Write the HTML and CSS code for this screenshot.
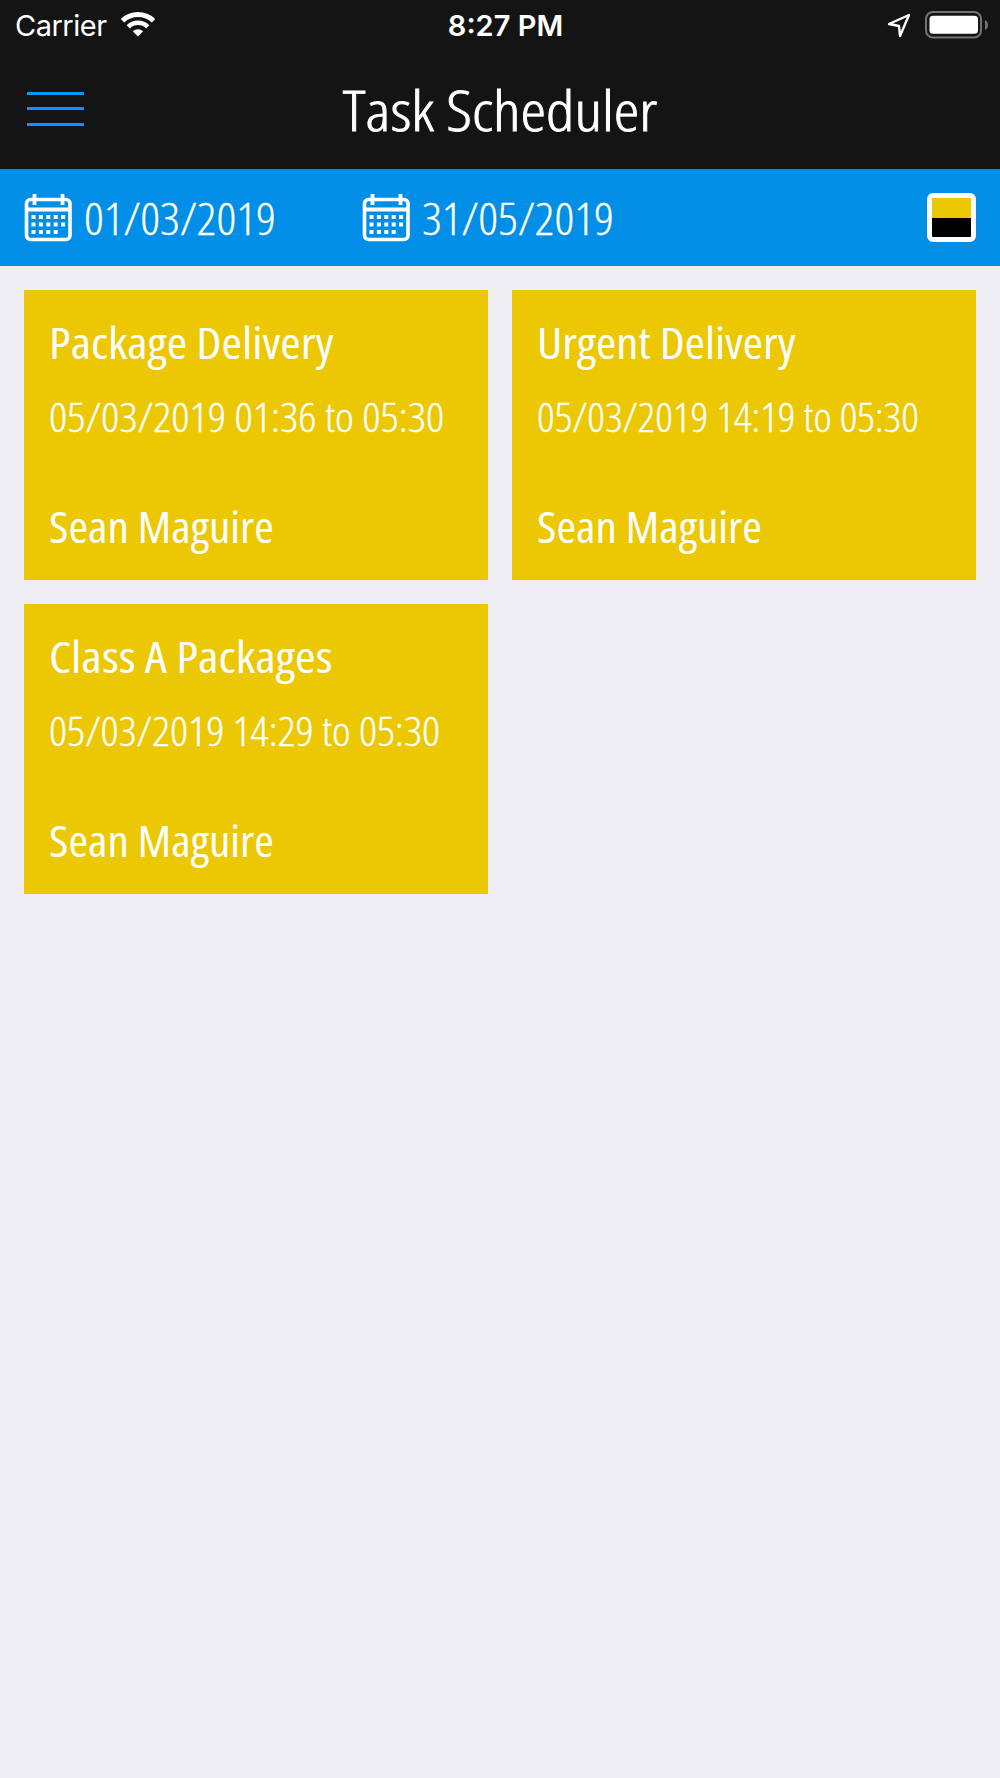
FILE: index.html
```html
<!DOCTYPE html>
<html lang="en">
<head>
    <meta charset="UTF-8">
    <meta name="viewport" content="width=device-width, initial-scale=1.0">
    <title>Task Scheduler</title>
    <link rel="stylesheet" href="styles.css">
</head>
<body>

<header class="header">
    <div class="status-bar">
        <div class="status-left">
            <span class="carrier">Carrier</span>
            <svg class="wifi" width="34" height="25" viewBox="0 0 34 25" fill="none" stroke="#fff">
                <path d="M1.500 8.800A22.500 22.500 0 0 1 32.500 8.800" stroke-width="5"/>
                <path d="M7.300 14.800A13.800 13.800 0 0 1 26.700 14.800" stroke-width="4.600"/>
                <path d="M17 24.500L11.800 19.300Q17 15 22.200 19.300Z" fill="#fff" stroke="none"/>
            </svg>
        </div>
        <span class="clock">8:27 PM</span>
        <div class="status-right">
            <svg width="24" height="26" viewBox="0 0 24 26" fill="none" stroke="#fff" stroke-width="2.400" stroke-linejoin="round">
                <path d="M22 3L2 12L12 14L13 24Z"/>
            </svg>
            <svg class="battery" width="64" height="28" viewBox="0 0 64 28">
                <rect x="1" y="1" width="55" height="25.500" rx="7" fill="none" stroke="#737373" stroke-width="2"/>
                <rect x="4.500" y="4.800" width="48.500" height="18" rx="3.500" fill="#fff"/>
                <path d="M60 9Q63 10.500 63 14T60 19Z" fill="#737373"/>
            </svg>
        </div>
    </div>
    <div class="nav-bar">
        <button class="menu-button" aria-label="Menu">
            <span></span>
            <span></span>
            <span></span>
        </button>
        <h1 class="title">Task Scheduler</h1>
    </div>
</header>

<div class="filter-bar">
    <div class="date">
        <svg class="calendar" width="48" height="49" viewBox="0 0 48 49">
            <rect x="2.500" y="6.500" width="43.500" height="40" rx="4" fill="none" stroke="#fff" stroke-width="3.600"/>
            <path d="M2.500 16.500H46M10.500 1V12M38.500 1V12" stroke="#fff" stroke-width="3.800"/>
            <path d="M7.500 24H42.500M7.500 31.500H42.500M7.500 39H35" stroke="#fff" stroke-width="4" stroke-dasharray="4 3.400"/>
        </svg>
        <span class="date-text">01/03/2019</span>
    </div>
    <div class="date">
        <svg class="calendar" width="48" height="49" viewBox="0 0 48 49">
            <rect x="2.500" y="6.500" width="43.500" height="40" rx="4" fill="none" stroke="#fff" stroke-width="3.600"/>
            <path d="M2.500 16.500H46M10.500 1V12M38.500 1V12" stroke="#fff" stroke-width="3.800"/>
            <path d="M7.500 24H42.500M7.500 31.500H42.500M7.500 39H35" stroke="#fff" stroke-width="4" stroke-dasharray="4 3.400"/>
        </svg>
        <span class="date-text">31/05/2019</span>
    </div>
    <button class="color-toggle" aria-label="Status colours"></button>
</div>

<main class="tasks">
    <div class="task">
        <h2 class="task-name">Package Delivery</h2>
        <p class="task-time">05/03/2019 01:36 to 05:30</p>
        <p class="task-user">Sean Maguire</p>
    </div>
    <div class="task">
        <h2 class="task-name">Urgent Delivery</h2>
        <p class="task-time">05/03/2019 14:19 to 05:30</p>
        <p class="task-user">Sean Maguire</p>
    </div>
    <div class="task">
        <h2 class="task-name">Class A Packages</h2>
        <p class="task-time">05/03/2019 14:29 to 05:30</p>
        <p class="task-user">Sean Maguire</p>
    </div>
</main>

</body>
</html>
```

FILE: styles.css
```css
* {
    box-sizing: border-box;
}
body {
    margin: 0;
    min-height: 100vh;
    background-color: #efeef4;
    color: white;
    font-family: "Open Sans", sans-serif;
    font-stretch: 75%;
}
h1, h2, p {
    margin: 0;
    font-weight: 400;
    white-space: nowrap;
}
button {
    padding: 0;
    border: none;
    background: none;
}
svg {
    display: block;
}
.header {
    height: 169px;
    background-color: #141414;
}
.status-bar {
    height: 50px;
    padding: 0 11px 0 15px;
    display: grid;
    grid-template-columns: 1fr auto 1fr;
    align-items: center;
    font-family: Inter, sans-serif;
    font-size: 29px;
    font-stretch: 100%;
}
.status-left {
    display: flex;
    align-items: center;
    gap: 14px;
}
.carrier {
    letter-spacing: -0.5px;
}
.wifi {
    margin-bottom: 2px;
}
.clock {
    font-weight: 600;
    padding-left: 7px;
}
.status-right {
    display: flex;
    align-items: center;
    justify-content: flex-end;
    gap: 14px;
}
.battery {
    margin-bottom: 1px;
}
.nav-bar {
    height: 119px;
    padding: 0 27px;
    display: grid;
    grid-template-columns: 57px 1fr 57px;
    align-items: center;
}
.menu-button {
    width: 57px;
    height: 34px;
    margin-bottom: 2px;
    display: flex;
    flex-direction: column;
    justify-content: space-between;
}
.menu-button span {
    width: 57px;
    height: 3px;
    background-color: #0098fb;
}
.title {
    padding-bottom: 1px;
    font-size: 56px;
    font-weight: 300;
    line-height: 78px;
    text-align: center;
    -webkit-text-stroke: 0.8px white;
    transform: scaleX(1.155);
}
.filter-bar {
    height: 97px;
    padding: 0 24px;
    display: flex;
    align-items: center;
    background-color: #008ee6;
}
.date {
    width: 338px;
    display: flex;
    align-items: center;
    gap: 12px;
    font-size: 45px;
    font-weight: 300;
}
.date-text {
    -webkit-text-stroke: 0.3px white;
    transform: scaleX(1.08);
    transform-origin: left;
}
.color-toggle {
    width: 49px;
    height: 49px;
    margin-left: auto;
    border: 5px solid white;
    border-radius: 6px;
    background: linear-gradient(#ebc803 50%, black 50%);
}
.tasks {
    padding: 24px;
    display: grid;
    grid-template-columns: 1fr 1fr;
    gap: 24px;
}
.task {
    height: 290px;
    padding: 22px 25px 24px;
    display: flex;
    flex-direction: column;
    align-items: flex-start;
    background-color: #ebc803;
}
.task-name, .task-user {
    font-size: 44px;
    line-height: 60px;
    font-weight: 400;
    transform: scaleX(1.124);
    transform-origin: left;
}
.task-time {
    margin-top: 18px;
    font-size: 40px;
    line-height: 54px;
    font-weight: 300;
    -webkit-text-stroke: 0.3px white;
    transform: scaleX(1.122);
    transform-origin: left;
}
.task:nth-child(2) .task-name {
    transform: scaleX(1.112);
}
.task:nth-child(2) .task-time {
    transform: scaleX(1.084);
}
.task:nth-child(3) .task-name {
    transform: scaleX(1.136);
}
.task:nth-child(3) .task-time {
    transform: scaleX(1.11);
}
.task-user {
    margin-top: auto;
    transform: scaleX(1.076);
}
```
